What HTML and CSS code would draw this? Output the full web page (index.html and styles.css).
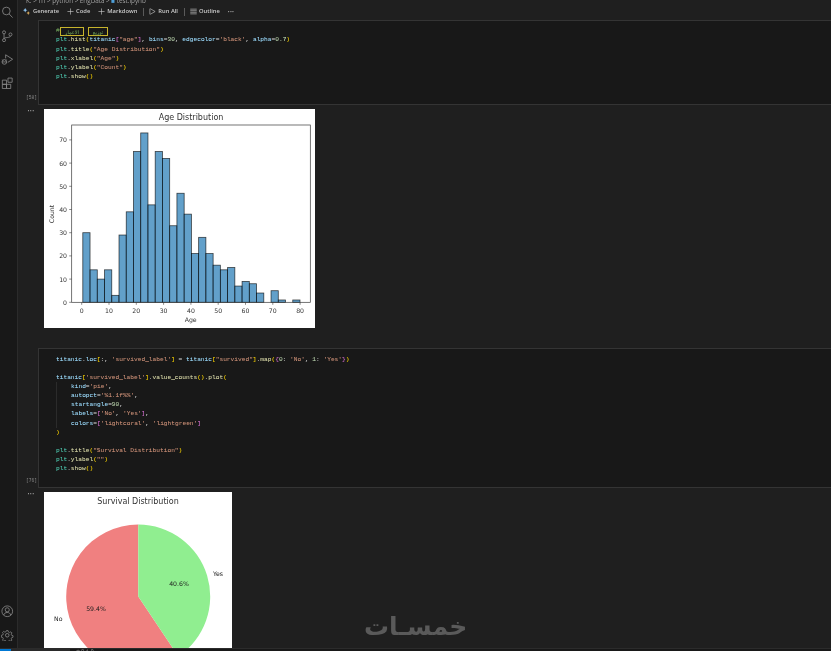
FILE: index.html
```html
<!DOCTYPE html>
<html lang="en">
<head>
<meta charset="utf-8">
<title>test.ipynb</title>
<link rel="stylesheet" href="styles.css">
</head>
<body>
<div class="window">
  <div class="workbench">
    <aside class="activity">
      <div class="activity-group">
        <svg class="act-icon" viewBox="0 0 14 14"><circle cx="6" cy="5.6" r="4.3"/><path d="M9 8.8 13 13"/></svg>
        <svg class="act-icon" viewBox="0 0 14 14"><circle cx="3.4" cy="2.6" r="1.7"/><circle cx="3.4" cy="11.4" r="1.7"/><circle cx="10.6" cy="5" r="1.7"/><path d="M3.4 4.3v5.4M10.6 6.7c0 2.4-7.2 1.2-7.2 3"/></svg>
        <svg class="act-icon" viewBox="0 0 14 14"><path d="M5.2 2 13 7 7.6 10.5M5.2 2v4"/><circle cx="3.8" cy="10" r="2.6"/><path d="M1 10h5.4M1.4 7.4l1 1M6.2 7.4l-1 1"/></svg>
        <svg class="act-icon" viewBox="0 0 14 14"><path d="M1.5 3.5h4.7v4.7H1.5zM1.5 8.2h4.7v4.7H1.5zM6.2 8.2h4.7v4.7H6.2z"/><path d="M7.8 1.2h4.7v4.7H7.8z"/></svg>
      </div>
      <div class="activity-group activity-bottom">
        <svg class="act-icon" viewBox="0 0 14 14"><circle cx="7" cy="7" r="6"/><circle cx="7" cy="5.4" r="2.3"/><path d="M3 11.4c.6-2.2 2-3 4-3s3.4.8 4 3"/></svg>
        <svg class="act-icon" viewBox="0 0 14 14"><circle cx="7" cy="7" r="2"/><path d="M6 1.2h2l.4 1.8 1.5.7 1.6-1 1.4 1.4-1 1.6.7 1.5 1.6.3v2l-1.6.4-.7 1.5 1 1.6-1.4 1.4-1.6-1-1.5.7-.4 1.6H6l-.4-1.6-1.5-.7-1.6 1-1.4-1.4 1-1.6-.7-1.5-1.6-.4V7l1.6-.3.7-1.5-1-1.6 1.4-1.4 1.6 1 1.5-.7z" transform="translate(.7 .7) scale(.9)"/></svg>
      </div>
    </aside>

    <main class="editor">
      <nav class="crumbs">K: &gt; ITI &gt; python &gt; EngData &gt; <span class="crumb-file">■</span> test.ipynb</nav>

      <div class="toolbar">
        <span class="tool tool-first"><svg class="tool-icon" viewBox="0 0 8 8"><path class="fill-blue" d="M2.5 0 3.4 1.8 5 2.5 3.4 3.2 2.5 5 1.6 3.2 0 2.5 1.6 1.8z"/><path class="fill-gold" d="M6 3.6 6.7 5 8 5.6 6.7 6.2 6 8 5.3 6.2 4 5.6 5.3 5z"/></svg>Generate</span>
        <span class="tool"><svg class="tool-icon" viewBox="0 0 8 8"><path d="M4 .5v7M.5 4h7"/></svg>Code</span>
        <span class="tool"><svg class="tool-icon" viewBox="0 0 8 8"><path d="M4 .5v7M.5 4h7"/></svg>Markdown</span>
        <span class="tool-sep"></span>
        <span class="tool"><svg class="tool-icon" viewBox="0 0 8 8"><path d="M1 .7v6.6M1.4 .8 7 4 1.4 7.2"/></svg>Run All</span>
        <span class="tool-sep"></span>
        <span class="tool"><svg class="tool-icon" viewBox="0 0 8 8"><path d="M.3 1.3h7.4M.3 3.1h7.4M.3 4.9h7.4M.3 6.7h7.4"/></svg>Outline</span>
        <span class="tool tool-more">···</span>
      </div>

      <section class="cell">
        <div class="gutter"><span class="exec">[58]</span></div>
        <div class="code">
          <div class="line"><span class="cm">#<bdi class="flag flag-a">الاعمار</bdi><bdi class="flag flag-b">توزيع</bdi></span></div>
          <div class="line"><span class="cls">plt</span>.<span class="fn">hist</span><span class="b1">(</span><span class="v">titanic</span><span class="b2">[</span><span class="s">"age"</span><span class="b2">]</span>, <span class="v">bins</span>=<span class="n">30</span>, <span class="v">edgecolor</span>=<span class="s">'black'</span>, <span class="v">alpha</span>=<span class="n">0.7</span><span class="b1">)</span></div>
          <div class="line"><span class="cls">plt</span>.<span class="fn">title</span><span class="b1">(</span><span class="s">"Age Distribution"</span><span class="b1">)</span></div>
          <div class="line"><span class="cls">plt</span>.<span class="fn">xlabel</span><span class="b1">(</span><span class="s">"Age"</span><span class="b1">)</span></div>
          <div class="line"><span class="cls">plt</span>.<span class="fn">ylabel</span><span class="b1">(</span><span class="s">"Count"</span><span class="b1">)</span></div>
          <div class="line"><span class="cls">plt</span>.<span class="fn">show</span><span class="b1">()</span></div>
          <div class="line"></div>
        </div>
      </section>

      <section class="output output-hist">
        <div class="gutter gutter-out"><span class="dots">···</span></div>
        <svg class="figure" width="271" height="219" viewBox="0 0 271 219">
          <text class="title" x="147" y="11" text-anchor="middle">Age Distribution</text>
          <g class="bars">
            <rect x="38.8" y="123.7" width="7.24" height="69.6"/><rect x="46.04" y="160.82" width="7.24" height="32.48"/><rect x="53.28" y="170.1" width="7.24" height="23.2"/><rect x="60.52" y="160.82" width="7.24" height="32.48"/><rect x="67.76" y="186.34" width="7.24" height="6.96"/><rect x="75" y="126.02" width="7.24" height="67.28"/><rect x="82.24" y="102.82" width="7.24" height="90.48"/><rect x="89.48" y="42.5" width="7.24" height="150.8"/><rect x="96.72" y="23.94" width="7.24" height="169.36"/><rect x="103.96" y="95.86" width="7.24" height="97.44"/><rect x="111.2" y="42.5" width="7.24" height="150.8"/><rect x="118.44" y="49.46" width="7.24" height="143.84"/><rect x="125.68" y="116.74" width="7.24" height="76.56"/><rect x="132.92" y="84.26" width="7.24" height="109.04"/><rect x="140.16" y="105.14" width="7.24" height="88.16"/><rect x="147.4" y="144.58" width="7.24" height="48.72"/><rect x="154.64" y="128.34" width="7.24" height="64.96"/><rect x="161.88" y="144.58" width="7.24" height="48.72"/><rect x="169.12" y="156.18" width="7.24" height="37.12"/><rect x="176.36" y="160.82" width="7.24" height="32.48"/><rect x="183.6" y="158.5" width="7.24" height="34.8"/><rect x="190.84" y="177.06" width="7.24" height="16.24"/><rect x="198.08" y="172.42" width="7.24" height="20.88"/><rect x="205.32" y="174.74" width="7.24" height="18.56"/><rect x="212.56" y="184.02" width="7.24" height="9.28"/><rect x="227.04" y="181.7" width="7.24" height="11.6"/><rect x="234.28" y="190.98" width="7.24" height="2.32"/><rect x="248.76" y="190.98" width="7.24" height="2.32"/>
          </g>
          <rect class="axes" x="27.7" y="16" width="238.6" height="177.3"/>
          <path class="ticks" d="M37.7 193.3v2.5M65 193.3v2.5M92.3 193.3v2.5M119.6 193.3v2.5M146.9 193.3v2.5M174.2 193.3v2.5M201.5 193.3v2.5M228.8 193.3v2.5M256.1 193.3v2.5M27.7 193.3h-2.5M27.7 170.1h-2.5M27.7 146.9h-2.5M27.7 123.7h-2.5M27.7 100.5h-2.5M27.7 77.3h-2.5M27.7 54.1h-2.5M27.7 30.9h-2.5"/>
          <g class="tick-x" text-anchor="middle">
            <text x="37.7" y="204">0</text><text x="65" y="204">10</text><text x="92.3" y="204">20</text><text x="119.6" y="204">30</text><text x="146.9" y="204">40</text><text x="174.2" y="204">50</text><text x="201.5" y="204">60</text><text x="228.8" y="204">70</text><text x="256.1" y="204">80</text>
          </g>
          <g class="tick-y" text-anchor="end">
            <text x="23" y="195.7">0</text><text x="23" y="172.5">10</text><text x="23" y="149.3">20</text><text x="23" y="126.1">30</text><text x="23" y="102.9">40</text><text x="23" y="79.7">50</text><text x="23" y="56.5">60</text><text x="23" y="33.3">70</text>
          </g>
          <text class="axis-label" x="146.7" y="213" text-anchor="middle">Age</text>
          <text class="axis-label" transform="translate(10.4 105) rotate(-90)" text-anchor="middle">Count</text>
        </svg>
      </section>

      <section class="cell">
        <div class="gutter"><span class="exec">[76]</span></div>
        <div class="code">
          <div class="line"><span class="v">titanic</span>.<span class="v">loc</span><span class="b1">[</span>:, <span class="s">'survived_label'</span><span class="b1">]</span> = <span class="v">titanic</span><span class="b1">[</span><span class="s">"survived"</span><span class="b1">]</span>.<span class="fn">map</span><span class="b1">(</span><span class="b2">{</span><span class="n">0</span>: <span class="s">'No'</span>, <span class="n">1</span>: <span class="s">'Yes'</span><span class="b2">}</span><span class="b1">)</span></div>
          <div class="line"></div>
          <div class="line"><span class="v">titanic</span><span class="b1">[</span><span class="s">'survived_label'</span><span class="b1">]</span>.<span class="fn">value_counts</span><span class="b1">()</span>.<span class="fn">plot</span><span class="b1">(</span></div>
          <div class="line indent"><span class="v">kind</span>=<span class="s">'pie'</span>,</div>
          <div class="line indent"><span class="v">autopct</span>=<span class="s">'%1.1f%%'</span>,</div>
          <div class="line indent"><span class="v">startangle</span>=<span class="n">90</span>,</div>
          <div class="line indent"><span class="v">labels</span>=<span class="b2">[</span><span class="s">'No'</span>, <span class="s">'Yes'</span><span class="b2">]</span>,</div>
          <div class="line indent"><span class="v">colors</span>=<span class="b2">[</span><span class="s">'lightcoral'</span>, <span class="s">'lightgreen'</span><span class="b2">]</span></div>
          <div class="line"><span class="b1">)</span></div>
          <div class="line"></div>
          <div class="line"><span class="cls">plt</span>.<span class="fn">title</span><span class="b1">(</span><span class="s">"Survival Distribution"</span><span class="b1">)</span></div>
          <div class="line"><span class="cls">plt</span>.<span class="fn">ylabel</span><span class="b1">(</span><span class="s">""</span><span class="b1">)</span></div>
          <div class="line"><span class="cls">plt</span>.<span class="fn">show</span><span class="b1">()</span></div>
        </div>
      </section>

      <section class="output">
        <div class="gutter gutter-out"><span class="dots">···</span></div>
        <svg class="figure" width="188" height="156" viewBox="0 0 188 156">
          <text class="title" x="94" y="11.5" text-anchor="middle">Survival Distribution</text>
          <path class="slice-no" d="M94.3 104.5V32.5A72 72 0 1 0 134.3 164.3Z"/>
          <path class="slice-yes" d="M94.3 104.5V32.5A72 72 0 0 1 134.3 164.3Z"/>
          <text class="pie-label" x="169" y="84">Yes</text>
          <text class="pie-label" x="10" y="129">No</text>
          <text class="pie-label" x="135" y="94" text-anchor="middle">40.6%</text>
          <text class="pie-label" x="52" y="119" text-anchor="middle">59.4%</text>
        </svg>
      </section>

      <div class="watermark">خمسـات</div>
    </main>
  </div>
  <footer class="statusbar">
    <span class="remote"></span>
    <span class="status-mid"></span>
    <span class="status-glyphs">⊗ 0 ⚠ 0</span>
  </footer>
</div>
</body>
</html>
```
FILE: styles.css
```css
* { box-sizing: border-box; }

html, body {
  margin: 0;
  height: 100%;
  overflow: hidden;
  background: #1f1f1f;
}

.window {
  width: 831px;
  height: 651px;
  display: flex;
  flex-direction: column;
  filter: blur(0.3px);
}

.workbench {
  flex: 1;
  min-height: 0;
  display: flex;
}

.activity {
  width: 18px;
  flex: none;
  background: #181818;
  border-right: 1px solid #2b2b2b;
  display: flex;
  flex-direction: column;
  justify-content: space-between;
  padding: 6px 0 7px 0;
}

.activity-group {
  display: flex;
  flex-direction: column;
  gap: 11px;
  padding-left: 1px;
}

.activity-bottom { gap: 11px; }

.act-icon {
  width: 12.5px;
  height: 12.5px;
  fill: none;
  stroke: #8c8c8c;
  stroke-width: 0.9;
}

.editor {
  position: relative;
  flex: 1;
  min-width: 0;
  overflow: hidden;
  background: #1f1f1f;
}

.crumbs {
  height: 5px;
  padding-left: 8px;
  font: 6.3px/1 "Open Sans", sans-serif;
  color: #a0a0a0;
  margin-top: -2px;
  margin-bottom: 2px;
  white-space: nowrap;
}

.crumb-file { color: #4f9fd8; }

.toolbar {
  height: 15px;
  display: flex;
  align-items: center;
  padding: 0 0 2px 5px;
  color: #cccccc;
  font: 600 5.8px/1 "Open Sans", sans-serif;
  white-space: nowrap;
}

.tool {
  display: flex;
  align-items: center;
  gap: 2px;
  margin-right: 8px;
}

.tool-first { gap: 3px; }

.tool-icon {
  width: 7px;
  height: 7px;
  fill: none;
  stroke: #cccccc;
  stroke-width: 0.7;
}

.fill-blue { fill: #8fc4ee; stroke: none; }
.fill-gold { fill: #e0b060; stroke: none; }

.tool-sep {
  width: 1px;
  height: 8px;
  background: #5a5a5a;
  margin: 0 5px 0 -2px;
}

.tool-more { margin: 0; letter-spacing: 0.2px; font-size: 7px; }

.cell {
  display: flex;
}

.gutter {
  width: 20px;
  flex: none;
  display: flex;
  align-items: flex-end;
  justify-content: flex-end;
  padding: 0 1px 4px 0;
}

.exec {
  font: 4.6px/1 "Liberation Mono", monospace;
  color: #8a8a8a;
}

.code {
  flex: 1;
  background: #181818;
  border: 1px solid #343434;
  border-right: 0;
  padding: 5.2px 0 13.4px 17px;
  font: 6.19px/9.16px "Liberation Mono", monospace;
  color: #d4d4d4;
}

.line { height: 9.16px; white-space: pre; -webkit-text-stroke: 0.06px currentColor; }
.indent { padding-left: 15px; box-shadow: inset 0.6px 0 0 #3a3a3a; }

.cm { color: #6a9955; }
.cls { color: #4ec9b0; }
.fn { color: #dcdcaa; }
.v { color: #9cdcfe; }
.s { color: #ce9178; }
.n { color: #b5cea8; }
.b1 { color: #ffd700; }
.b2 { color: #da70d6; }

.flag {
  display: inline-block;
  height: 9px;
  line-height: 8px;
  margin-top: 0.7px;
  vertical-align: top;
  border: 1px solid #c7b42c;
  text-align: center;
  font-family: "DejaVu Sans", sans-serif;
  font-size: 5px;
}

.flag-a { width: 24px; margin-left: 0.3px; }
.flag-b { width: 20px; margin-left: 4px; }

.output {
  display: flex;
  padding-top: 4px;
  align-items: flex-start;
}

.output-hist { height: 243.7px; }

.gutter-out {
  width: 26px;
  align-items: flex-start;
  justify-content: center;
  padding: 0;
}

.dots {
  font: 700 7px/4px "Liberation Sans", sans-serif;
  color: #9a9a9a;
}

.figure {
  display: block;
  flex: none;
  background: #ffffff;
}

.figure text { font-family: "DejaVu Sans", sans-serif; fill: #333333; }
.figure .title { font-size: 8px; }
.figure .tick-x text, .figure .tick-y text, .figure .axis-label { font-size: 6.2px; }
.figure .pie-label { font-size: 6.2px; fill: #1c1c1c; }

.bars rect {
  fill: #1f77b4;
  fill-opacity: 0.7;
  stroke: #000000;
  stroke-opacity: 0.7;
  stroke-width: 0.8;
}

.axes { fill: none; stroke: #3a3a3a; stroke-width: 0.7; }
.ticks { fill: none; stroke: #3a3a3a; stroke-width: 0.6; }

.slice-no { fill: #f08080; }
.slice-yes { fill: #90ee90; }

.watermark {
  position: absolute;
  left: 346px;
  top: 608px;
  width: 102px;
  text-align: center;
  font: 700 25px/38px "DejaVu Sans", sans-serif;
  color: #5a5a5a;
  white-space: nowrap;
  pointer-events: none;
}

.statusbar {
  height: 3px;
  flex: none;
  display: flex;
  overflow: hidden;
  background: #181818;
  border-top: 1px solid #2b2b2b;
  font: 5px/5px "Open Sans", sans-serif;
  color: #a0a0a0;
}

.remote { width: 11px; background: #0078d4; }
.status-mid { width: 59px; background: #2a2a2a; }
.status-glyphs { padding-left: 6px; white-space: nowrap; }
```
